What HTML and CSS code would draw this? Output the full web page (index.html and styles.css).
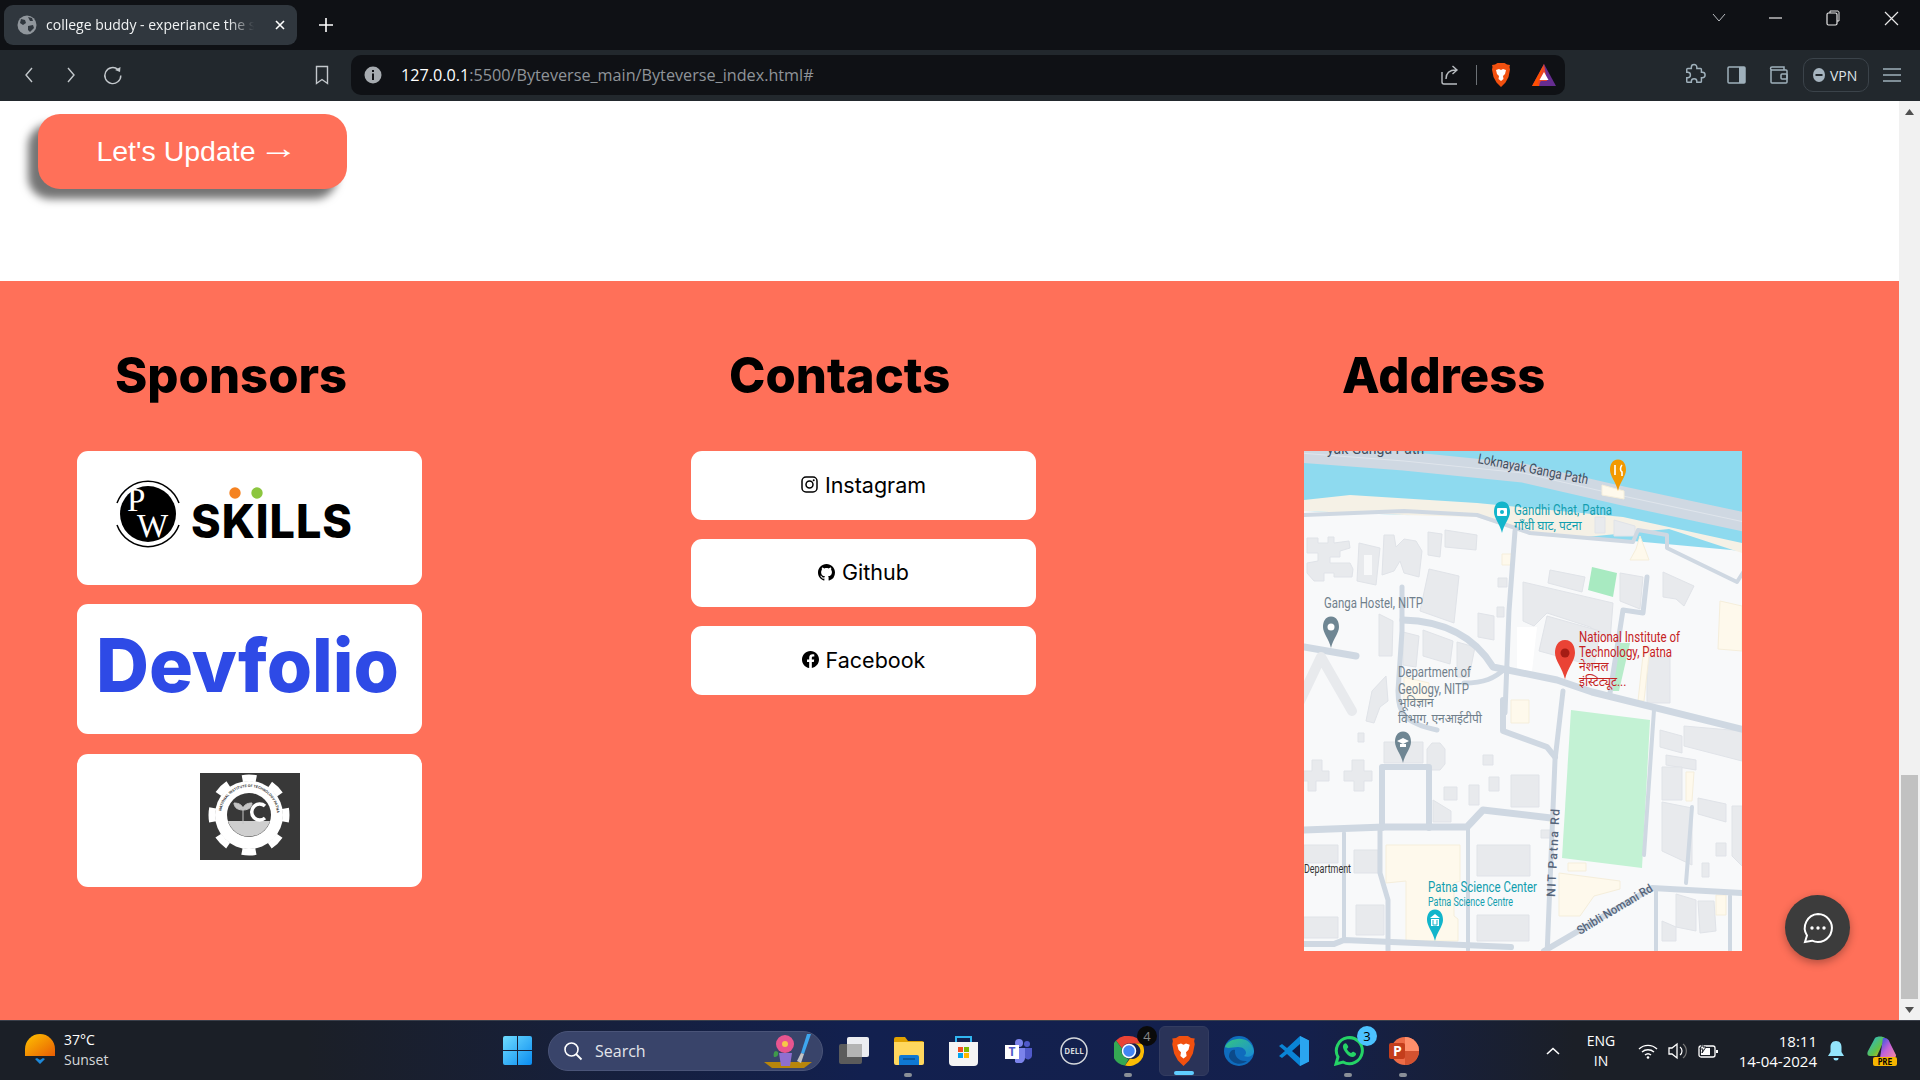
FILE: index.html
```html
<!DOCTYPE html>
<html lang="en">
<head>
    <meta charset="UTF-8">
    <meta name="viewport" content="width=device-width, initial-scale=1.0">
    <title>college buddy - experiance the smart way</title>
    <link rel="stylesheet" href="styles.css">
</head>
<body>
<div class="screen">

    <!-- browser tabs -->
    <div class="tabbar">
        <div class="tab">
            <svg class="tab-globe" width="20" height="20" viewBox="0 0 20 20"><circle cx="10" cy="10" r="9.5" fill="#90969c"/><path d="M4 4l4 1 1 3-3 2-3-2zM11 11l5-1 1 3-4 4-2-2zM11 2l4 1 1 3-3 0z" fill="#30373e"/></svg>
            <span class="tab-title">college buddy - experiance the s</span>
            <svg width="12" height="12" viewBox="0 0 12 12"><path d="M2 2l8 8M10 2l-8 8" stroke="#fff" stroke-width="1.6"/></svg>
        </div>
        <svg class="newtab" width="16" height="16" viewBox="0 0 16 16"><path d="M8 1v14M1 8h14" stroke="#fff" stroke-width="1.6"/></svg>
        <div class="winctl">
            <svg width="58" height="36" viewBox="0 0 58 36"><path d="M25 14l6 7 6-7" fill="none" stroke="#b9bdc1"/></svg>
            <svg width="58" height="36" viewBox="0 0 58 36"><path d="M23 18h13" stroke="#e8e8e8" stroke-width="1.2"/></svg>
            <svg width="58" height="36" viewBox="0 0 58 36"><rect x="23" y="13" width="10" height="12" rx="1.5" fill="none" stroke="#e8e8e8" stroke-width="1.2"/><path d="M26 13v-2h8a1.500 1.500 0 0 1 1 1v9h-2" fill="none" stroke="#e8e8e8"/></svg>
            <svg width="58" height="36" viewBox="0 0 58 36"><path d="M23 12l13 13M36 12L23 25" stroke="#e8e8e8" stroke-width="1.2"/></svg>
        </div>
    </div>

    <!-- browser toolbar -->
    <div class="toolbar">
        <div class="tool"><svg width="20" height="20" viewBox="0 0 20 20"><path d="M13 3l-6 7 6 7" fill="none" stroke="#c3c8cc" stroke-width="1.4"/></svg></div>
        <div class="tool"><svg width="20" height="20" viewBox="0 0 20 20"><path d="M7 3l6 7-6 7" fill="none" stroke="#c3c8cc" stroke-width="1.4"/></svg></div>
        <div class="tool"><svg width="22" height="22" viewBox="0 0 22 22"><path d="M16 5.500a8 8 0 1 0 2.800 6" fill="none" stroke="#c3c8cc" stroke-width="1.400"/><path d="M13 6l5 2 .5-5z" fill="#c3c8cc"/></svg></div>
        <div class="tool tool-bookmark"><svg width="18" height="20" viewBox="0 0 18 20"><path d="M3.500 1.500h11v17l-5.500-4-5.500 4z" fill="none" stroke="#c3c8cc" stroke-width="1.400"/></svg></div>
        <div class="urlbar">
            <svg class="url-info" width="18" height="18" viewBox="0 0 18 18"><circle cx="9" cy="9" r="8.500" fill="#a6abb0"/><path d="M8 4h2v2H8zM8 7.500h2V14H8z" fill="#0f1115"/></svg>
            <span class="url-text"><b>127.0.0.1</b>:5500/Byteverse_main/Byteverse_index.html#</span>
            <svg class="url-share" width="22" height="22" viewBox="0 0 22 22"><path d="M3 8v10a2 2 0 0 0 2 2h13" fill="none" stroke="#b9bdc1" stroke-width="1.400"/><path d="M7 15c0-6 4-9 10-9M13.500 2l4.500 4-4.500 4" fill="none" stroke="#b9bdc1" stroke-width="1.400"/></svg>
            <span class="url-sep"></span>
            <svg class="url-brave" width="20" height="24" viewBox="0 0 20 24"><path d="M4 1.500L6.500 0h7L16 1.500l3 .5-.5 2 .5 2.500-1.500 7.500-3 5.500-4.500 4.500-4.500-4.500-3-5.500L1 6.500 1.500 4 1 2z" fill="#f1500f"/><path d="M5 7l3-1 2 1 2-1 3 1-1 4-2 2 .5 3-2.500 2-2.500-2 .5-3-2-2z" fill="#fff"/></svg>
            <svg class="url-bat" width="24" height="22" viewBox="0 0 24 22"><path d="M12 0l12 22H0z" fill="#662d91"/><path d="M12 0L0 22h7z" fill="#ff5000"/><path d="M12 0L5 22l4-5h6z" fill="#e8462b"/><path d="M12 8l4.500 8h-9z" fill="#fff"/></svg>
        </div>
        <div class="tool tool-ext"><svg width="22" height="24" viewBox="0 0 24 24"><path d="M8 3.500a3 3 0 0 1 6 0V5h4a1 1 0 0 1 1 1v3h1a3 3 0 0 1 0 6h-1v4a1 1 0 0 1-1 1h-4v-1a3 3 0 0 0-6 0v1H4a1 1 0 0 1-1-1v-4h1a3 3 0 0 0 0-6H3V6a1 1 0 0 1 1-1h4z" fill="none" stroke="#9fb0bb" stroke-width="1.600"/></svg></div>
        <div class="tool"><svg width="20" height="20" viewBox="0 0 20 20"><rect x="1" y="2" width="17" height="16" rx="1" fill="none" stroke="#9fb0bb" stroke-width="1.500"/><rect x="12" y="2" width="6" height="16" fill="#9fb0bb"/></svg></div>
        <div class="tool"><svg width="20" height="20" viewBox="0 0 20 20"><path d="M2 5v12a1 1 0 0 0 1 1h14a1 1 0 0 0 1-1V6a1 1 0 0 0-1-1H3a1.500 1.500 0 0 1 0-3h12v3" fill="none" stroke="#9fb0bb" stroke-width="1.500"/><rect x="12" y="9" width="6" height="5" rx="1" fill="none" stroke="#9fb0bb" stroke-width="1.500"/></svg></div>
        <div class="vpn"><svg width="12" height="14" viewBox="0 0 12 14"><ellipse cx="6" cy="7" rx="6" ry="7" fill="#a6b4bf"/><rect x="2.500" y="6" width="7" height="2" fill="#22282d"/></svg><span>VPN</span></div>
        <div class="tool tool-menu"><svg width="18" height="14" viewBox="0 0 18 14"><path d="M0 1h18M0 7h18M0 13h18" stroke="#9fb0bb" stroke-width="1.500"/></svg></div>
    </div>

    <!-- the page -->
    <div class="viewport">
        <div class="page">
            <section class="update">
                <button class="update-btn">Let's Update<span class="update-arrow">→</span></button>
            </section>

            <footer class="site-footer">
                <div class="col">
                    <h2>Sponsors</h2>
                    <div class="card card-first">
                        <svg class="logo" width="345" height="134" viewBox="0 0 345 134">
                            <circle cx="71" cy="63" r="28" fill="#000"/>
                            <path d="M40 52a33 33 0 0 1 62 0M40 74a33 33 0 0 0 62 0" fill="none" stroke="#000" stroke-width="1.500"/>
                            <text class="pw-letter" x="50" y="60">P</text>
                            <text class="pw-letter" x="60" y="86">W</text>
                            <text class="pw-skills" x="114" y="87" textLength="162" lengthAdjust="spacingAndGlyphs">SKILLS</text>
                            <circle cx="158" cy="42" r="5.700" fill="#f58220"/>
                            <circle cx="180" cy="42" r="5.700" fill="#8cc63f"/>
                        </svg>
                    </div>
                    <div class="card">
                        <svg class="logo" width="345" height="130" viewBox="0 0 345 130">
                            <text class="devfolio" x="19" y="88" textLength="303" lengthAdjust="spacingAndGlyphs">Devfolio</text>
                        </svg>
                    </div>
                    <div class="card">
                        <svg class="logo" width="345" height="133" viewBox="0 0 345 133">
                            <rect x="123" y="19" width="100" height="87" fill="#383838"/>
                            <circle cx="172" cy="61" r="34" fill="#fff"/>
                            <circle cx="172" cy="61" r="37" fill="none" stroke="#fff" stroke-width="7" stroke-dasharray="14 15.060" stroke-dashoffset="7"/>
                            <circle cx="172" cy="61" r="22" fill="#383838"/>
                            <path d="M151 67h42a22 22 0 0 1-42 0z" fill="#cfcfcf"/>
                            <path d="M166 70V54M166 56c-7 0-9-4-9-7 5 0 9 2 9 7zM166 56c0-5 4-7 9-7 0 3-2 7-9 7z" fill="#c4c4c4" stroke="#c4c4c4" stroke-width="1"/>
                            <path d="M188 52a8 8 0 1 0 0 12" fill="none" stroke="#fff" stroke-width="3.500"/>
                            <path id="gearArc" d="M144 61a28 28 0 0 1 56 0" fill="none"/>
                            <text class="gear-text"><textPath href="#gearArc" startOffset="4">NATIONAL INSTITUTE OF TECHNOLOGY PATNA</textPath></text>
                        </svg>
                    </div>
                </div>

                <div class="col">
                    <h2>Contacts</h2>
                    <a class="contact contact-tall" href="#">
                        <svg width="17" height="17" viewBox="0 0 17 17"><rect x="1" y="1" width="15" height="15" rx="4" fill="none" stroke="#000" stroke-width="1.500"/><circle cx="8.500" cy="8.500" r="3.500" fill="none" stroke="#000" stroke-width="1.500"/><circle cx="12.700" cy="4.300" r="1" fill="#000"/></svg>
                        Instagram
                    </a>
                    <a class="contact" href="#">
                        <svg width="17" height="17" viewBox="0 0 16 16"><path d="M8 0C3.580 0 0 3.580 0 8c0 3.540 2.290 6.530 5.470 7.590.4.070.55-.17.55-.38 0-.19-.01-.82-.01-1.490-2.010.37-2.530-.49-2.690-.94-.09-.23-.48-.94-.82-1.130-.28-.15-.68-.52-.01-.53.63-.01 1.080.58 1.230.82.720 1.210 1.870.87 2.330.66.070-.52.280-.87.510-1.070-1.780-.2-3.640-.89-3.640-3.950 0-.87.310-1.590.82-2.150-.08-.2-.36-1.020.08-2.120 0 0 .67-.21 2.200.82.640-.18 1.320-.27 2-.27.680 0 1.360.09 2 .27 1.530-1.040 2.200-.82 2.200-.82.440 1.100.160 1.920.080 2.120.510.560.820 1.270.820 2.150 0 3.070-1.870 3.750-3.650 3.950.290.250.540.730.540 1.480 0 1.070-.01 1.930-.01 2.200 0 .210.150.460.550.380A8.012 8.012 0 0 0 16 8c0-4.420-3.580-8-8-8z"/></svg>
                        Github
                    </a>
                    <a class="contact contact-tall" href="#">
                        <svg width="17" height="17" viewBox="0 0 16 16"><path d="M16 8.049c0-4.446-3.582-8.050-8-8.050C3.580 0-.002 3.603-.002 8.050c0 4.017 2.926 7.347 6.750 7.951v-5.625h-2.030V8.050H6.750V6.275c0-2.017 1.195-3.131 3.022-3.131.876 0 1.791.157 1.791.157v1.980h-1.009c-.993 0-1.303.621-1.303 1.258v1.510h2.218l-.354 2.326H9.250V16c3.824-.604 6.750-3.934 6.750-7.951z"/></svg>
                        Facebook
                    </a>
                </div>

                <div class="col">
                    <h2>Address</h2>
                    <svg class="map" width="438" height="500" viewBox="0 0 438 500">
                        <defs>
                            <path id="pin" d="M0 -10.500C6 -10.500 8 -5 8 0C8 6 2 12 0 21C-2 12 -8 6 -8 0C-8 -5 -6 -10.500 0 -10.500Z"/>
                        </defs>
                        <rect width="438" height="500" fill="#f8f9fa"/>
                        <path d="M0 0H438V100L0 60Z" fill="#8edaef"/>
                        <path d="M0 49L46 44L173 52L319 66L438 92V102L365 78L240 90L180 75L100 64L0 60Z" fill="#f5f1e6"/>
                        <path d="M0 60L100 64L173 66L226 84L330 92L340 110L438 108V500H0Z" fill="#f8f9fa"/>
                        <path class="m-road" d="M-5 2L100 10L219 22L319 45L445 72" stroke="#d3dbe5" stroke-width="19"/>
                        <path d="M-5 2L100 10L219 22L319 45L445 72" fill="none" stroke="#dfe5ec" stroke-width="1"/>

                        <g class="m-bld">
                            <polygon points="3,87 14,87 14,92 24,92 24,86 30,86 30,92 45,90 46,97 36,100 36,106 26,106 26,112 46,112 49,118 48,126 30,126 30,122 20,122 20,130 10,130 3,122 3,112 14,110 14,102 3,102"/>
                            <polygon points="55,92 76,97 72,134 53,130"/>
                            <polygon points="80,84 90,84 92,96 100,88 112,90 118,100 115,126 100,122 96,110 90,120 78,124"/>
                            <polygon points="124,81 138,83 136,106 124,104"/>
                            <polygon points="141,79 173,84 172,99 141,96"/>
                            <polygon points="125,118 155,125 150,172 116,160"/>
                            <polygon points="194,127 203,127 203,136 194,136"/>
                            <polygon points="219,131 309,152 306,190 286,176 243,162 230,175 219,170"/>
                            <polygon points="243,165 296,180 290,215 235,200"/>
                            <polygon points="246,119 281,126 278,141 244,132"/>
                            <polygon points="316,122 339,126 336,158 316,150"/>
                            <polygon points="359,121 390,135 380,155 372,148 359,146"/>
                            <polygon points="291,66 301,66 301,82 291,82"/>
                            <polygon points="310,69 331,75 331,85 310,85"/>
                            <polygon points="343,206 366,206 366,252 343,252"/>
                            <polygon points="119,179 149,190 146,213 119,205"/>
                            <polygon points="99,181 115,185 112,216 99,214"/>
                            <polygon points="75,163 89,170 88,205 75,205"/>
                            <polygon points="153,191 171,196 165,226 153,226"/>
                            <polygon points="174,162 190,165 190,189 174,186"/>
                            <polygon points="193,156 200,156 200,166 193,166"/>
                            <polygon points="68,240 82,225 84,250 76,256 70,272 62,270"/>
                            <polygon points="356,279 378,285 378,302 356,296"/>
                            <polygon points="380,275 438,280 438,310 380,295"/>
                            <polygon points="362,304 392,309 392,319 362,314"/>
                            <polygon points="358,316 378,316 378,349 358,349"/>
                            <polygon points="358,351 388,357 388,414 358,400"/>
                            <polygon points="394,347 422,353 422,371 394,363"/>
                            <polygon points="412,392 422,392 422,405 412,405"/>
                            <polygon points="428,355 438,355 438,415 428,405"/>
                            <polygon points="207,324 235,324 235,356 207,356"/>
                            <polygon points="165,334 175,334 175,354 165,354"/>
                            <polygon points="185,326 195,326 195,340 185,340"/>
                            <polygon points="140,336 153,336 153,349 140,349"/>
                            <polygon points="129,349 147,360 147,371 129,371"/>
                            <polygon points="128,292 136,292 141,298 141,313 136,319 128,319 123,313 123,298"/>
                            <polygon points="80,291 119,291 119,312 80,312"/>
                            <polygon points="40,320 48,320 48,309 60,309 60,320 68,320 68,330 60,330 60,340 50,340 50,330 40,330"/>
                            <polygon points="0,320 8,320 8,309 18,309 18,320 25,320 25,330 12,330 12,340 4,340 4,330 0,330"/>
                            <polygon points="54,282 60,282 60,291 54,291"/>
                            <polygon points="179,304 189,304 189,314 179,314"/>
                            <polygon points="50,399 74,399 74,422 50,422"/>
                            <polygon points="0,394 34,394 34,412 0,412"/>
                            <polygon points="0,466 34,466 34,487 0,487"/>
                            <polygon points="52,454 80,454 80,484 52,484"/>
                            <polygon points="173,394 226,394 226,425 173,425"/>
                            <polygon points="173,464 225,464 225,490 173,490"/>
                            <polygon points="237,379 247,379 247,387 237,387"/>
                            <polygon points="398,412 405,412 405,426 398,426"/>
                            <polygon points="372,443 392,449 392,480 372,476"/>
                            <polygon points="394,450 410,450 412,480 396,482"/>
                            <polygon points="358,470 372,476 372,490 358,490"/>
                        </g>
                        <rect x="60" y="104" width="8" height="20" fill="#f8f9fa"/>
                        <g class="m-yel">
                            <polygon points="298,34 320,40 320,48 298,44"/>
                            <polygon points="198,103 209,103 209,114 198,114"/>
                            <polygon points="326,109 332,98 336,85 341,98 345,109"/>
                            <polygon points="416,150 438,155 438,200 414,198"/>
                            <polygon points="340,195 346,195 340,250 334,250"/>
                            <polygon points="382,321 390,321 388,350 382,350"/>
                            <polygon points="82,394 156,394 156,430 150,432 150,465 154,468 154,490 102,490 102,430 82,432"/>
                            <polygon points="255,422 316,430 316,438 290,445 276,465 255,465"/>
                            <polygon points="264,412 282,412 282,420 264,420"/>
                            <polygon points="207,249 225,249 225,272 207,272"/>
                            <polygon points="412,444 422,444 422,464 412,464"/>
                            <polygon points="100,226 125,232 125,250 100,250"/>
                        </g>
                        <polygon points="213,176 233,176 228,220 213,220" fill="#fff"/>

                        <polygon points="267,259 346,269 338,417 258,407" fill="#c3f2d4"/>
                        <polygon points="288,116 313,122 309,146 284,139" fill="#a8eac1"/>
                        <polygon points="316,192 326,192 315,240 305,240" fill="#b7ecca"/>

                        <path class="m-road" stroke-width="4" d="M0 64L100 60L173 64L226 82L329 91L334 79L363 84L363 97L433 131L440 120"/>
                        <path class="m-road" stroke-width="5" d="M211 80L205 160L201 262"/>
                        <path class="m-road" stroke-width="7" d="M99 169C140 170 170 185 189 216L253 229L288 241L445 280"/>
                        <path class="m-road" stroke-width="5" d="M98 136V180L94 240C94 262 100 272 133 279"/>
                        <path class="m-road" stroke-width="7" d="M0 196L52 205"/>
                        <path class="m-road" stroke-width="5" d="M203 216C190 228 180 232 160 232"/>
                        <path class="m-road m-light" stroke-width="10" d="M-4 250L17 206L48 260"/>
                        <path class="m-road" stroke-width="6" d="M78 377V316H125V377"/>
                        <path class="m-road" stroke-width="7" d="M0 379L80 376H163L179 359L247 367"/>
                        <path class="m-road" stroke-width="4" d="M164 377V499"/>
                        <path class="m-road" stroke-width="4" d="M40 382V489"/>
                        <path class="m-road" stroke-width="5" d="M76 379V422L84 449V499"/>
                        <path class="m-road" stroke-width="6" d="M0 493H30L40 489L207 496"/>
                        <path class="m-road" stroke-width="6" d="M199 249V280L243 296L251 306"/>
                        <path class="m-road" stroke-width="5" d="M259 240L251 309L243 505"/>
                        <path class="m-road" stroke-width="4" d="M350 259L340 404"/>
                        <path class="m-road" stroke-width="4" d="M388 356L382 432"/>
                        <path class="m-road" stroke-width="6" d="M240 500L348 437L438 442"/>
                        <path class="m-road" stroke-width="4" d="M352 440V505M426 445V505"/>
                        <path class="m-road" stroke-width="5" d="M343 126L339 162L319 159L306 242"/>

                        <text class="m-label m-dark" x="23" y="3">yak Ganga Path</text>
                        <text class="m-label m-dark" transform="rotate(11 174 8)" x="174" y="12" textLength="112" lengthAdjust="spacingAndGlyphs">Loknayak Ganga Path</text>
                        <text class="m-label m-teal" x="210" y="64" textLength="98" lengthAdjust="spacingAndGlyphs">Gandhi Ghat, Patna</text>
                        <text class="m-small m-teal" x="210" y="79">गाँधी घाट, पटना</text>
                        <text class="m-label m-slate" x="20" y="157" textLength="99" lengthAdjust="spacingAndGlyphs">Ganga Hostel, NITP</text>
                        <text class="m-label m-red" x="275" y="191" textLength="101" lengthAdjust="spacingAndGlyphs">National Institute of</text>
                        <text class="m-label m-red" x="275" y="206" textLength="93" lengthAdjust="spacingAndGlyphs">Technology, Patna</text>
                        <text class="m-small m-red" x="275" y="220">नेशनल</text>
                        <text class="m-small m-red" x="275" y="235">इंस्टिट्यूट...</text>
                        <text class="m-label m-slate" x="94" y="226" textLength="73" lengthAdjust="spacingAndGlyphs">Department of</text>
                        <text class="m-label m-slate" x="94" y="243" textLength="71" lengthAdjust="spacingAndGlyphs">Geology, NITP</text>
                        <text class="m-small m-slate" x="94" y="256">भूविज्ञान</text>
                        <text class="m-small m-slate" x="94" y="272">विभाग, एनआईटीपी</text>
                        <text class="m-small m-ink" x="0" y="422" textLength="47" lengthAdjust="spacingAndGlyphs">Department</text>
                        <text class="m-label m-teal" x="124" y="441" textLength="109" lengthAdjust="spacingAndGlyphs">Patna Science Center</text>
                        <text class="m-small m-teal" x="124" y="455" textLength="85" lengthAdjust="spacingAndGlyphs">Patna Science Centre</text>
                        <text class="m-road-name" transform="rotate(-87 251 446)" x="251" y="446" textLength="88">NIT Patna Rd</text>
                        <text class="m-road-name" transform="rotate(-31 276 484)" x="276" y="484" textLength="86" lengthAdjust="spacingAndGlyphs">Shibli Nomani Rd</text>

                        <use href="#pin" transform="translate(261 202) scale(1.250)" fill="#ea4335"/>
                        <circle cx="261" cy="202" r="4.500" fill="#a51c14"/>
                        <use href="#pin" transform="translate(314 19)" fill="#f29900"/>
                        <path d="M311 14v10M318 14c-2 2-2 6 0 7v4" fill="none" stroke="#fff" stroke-width="1.600"/>
                        <use href="#pin" transform="translate(198 61)" fill="#12b5cb"/>
                        <rect x="193" y="57" width="10" height="8" rx="1" fill="#fff"/>
                        <circle cx="198" cy="61" r="2" fill="#12b5cb"/>
                        <use href="#pin" transform="translate(27 176)" fill="#6f8693"/>
                        <circle cx="27" cy="176" r="3.500" fill="#fff"/>
                        <use href="#pin" transform="translate(99 291)" fill="#6f8693"/>
                        <path d="M93 290l6-3 6 3-6 3zM96 293v3h6v-3" fill="#fff"/>
                        <use href="#pin" transform="translate(131 469)" fill="#12b5cb"/>
                        <path d="M126 467l5-4 5 4zM127 468h8v7h-8z" fill="#fff"/>
                        <path d="M129 469v5h4v-5" fill="none" stroke="#12b5cb"/>
                    </svg>
                </div>
            </footer>
        </div>

        <div class="scrollbar">
            <div class="scroll-arrow"><svg width="9" height="6" viewBox="0 0 9 6"><path d="M4.500 0L9 6H0z" fill="#505050"/></svg></div>
            <div class="scroll-track"><div class="scroll-thumb"></div></div>
            <div class="scroll-arrow"><svg width="9" height="6" viewBox="0 0 9 6"><path d="M0 0H9L4.500 6z" fill="#505050"/></svg></div>
        </div>

        <button class="chat-btn">
            <svg width="34" height="34" viewBox="0 0 34 34"><path d="M17 3a14 14 0 1 1-6 26.700L4 31l2-6.500A14 14 0 0 1 17 3z" fill="none" stroke="#fff" stroke-width="2"/><circle cx="11" cy="17" r="1.700" fill="#fff"/><circle cx="17" cy="17" r="1.700" fill="#fff"/><circle cx="23" cy="17" r="1.700" fill="#fff"/></svg>
        </button>
    </div>

    <!-- windows taskbar -->
    <div class="taskbar">
        <div class="weather">
            <svg width="32" height="34" viewBox="0 0 32 34"><defs><linearGradient id="sun" x1="0" x2="1" y1="0" y2="1"><stop offset="0" stop-color="#ffc400"/><stop offset="1" stop-color="#e85d04"/></linearGradient></defs><path d="M1 22V15a15 15 0 0 1 30 0v7z" fill="url(#sun)"/><path d="M11 25l5 5 5-5-2-1-3 2-3-2z" fill="#1e88d8"/></svg>
            <div class="weather-text"><span>37°C</span><span class="weather-sub">Sunset</span></div>
        </div>
        <svg class="winlogo" width="29" height="29" viewBox="0 0 29 29"><defs><linearGradient id="win" x1="0" x2="1" y1="0" y2="1"><stop offset="0" stop-color="#6fdcff"/><stop offset="1" stop-color="#0a8cf0"/></linearGradient></defs><path d="M0 2a2 2 0 0 1 2-2h12v14H0zM15 0h12a2 2 0 0 1 2 2v12H15zM0 15h14v14H2a2 2 0 0 1-2-2zM15 15h14v12a2 2 0 0 1-2 2H15z" fill="url(#win)"/></svg>
        <div class="searchbox">
            <svg width="20" height="20" viewBox="0 0 20 20"><circle cx="8.500" cy="8.500" r="6.500" fill="none" stroke="#fff" stroke-width="1.600"/><path d="M13 13l5.500 5.500" stroke="#fff" stroke-width="1.800"/></svg>
            <span>Search</span>
            <svg class="search-art" width="52" height="36" viewBox="0 0 52 36"><path d="M2 29h48l-8 6H10z" fill="#b8860b"/><path d="M17 20h13l-2 13h-9z" fill="#8e6fd0"/><circle cx="23" cy="11" r="9" fill="#e8558f"/><circle cx="23" cy="11" r="3" fill="#f7c948"/><path d="M14 18c-2 0-3 3-2 6 3 0 5-2 4-5z" fill="#3f9b4b"/><path d="M49 1l-7 20-3-1 6-19z" fill="#3ea6ee"/><path d="M39 20l3 1-3 9-4-2z" fill="#c4c4c4"/></svg>
        </div>
        <div class="apps">
            <div class="app"><svg width="32" height="28" viewBox="0 0 32 28"><rect x="1" y="7" width="23" height="20" rx="2" fill="#5b5b5b"/><rect x="9" y="0" width="22" height="20" rx="2" fill="#fff" fill-opacity=".92"/><rect x="9" y="7" width="15" height="13" fill="#b4b4b4"/></svg></div>
            <div class="app open"><svg width="30" height="28" viewBox="0 0 30 28"><path d="M0 2a2 2 0 0 1 2-2h9l3 4h14a2 2 0 0 1 2 2v2H0z" fill="#e0a100"/><path d="M0 5h30v21a2 2 0 0 1-2 2H2a2 2 0 0 1-2-2z" fill="#ffd75e"/><path d="M5 20a2 2 0 0 1 2-2h16a2 2 0 0 1 2 2v8H5z" fill="#0f78d4"/><path d="M9 22h12" stroke="#0a4f8e" stroke-width="1.500"/></svg></div>
            <div class="app"><svg width="29" height="30" viewBox="0 0 29 30"><path d="M7 7V1h15v6" fill="none" stroke="#31b5f0" stroke-width="2"/><path d="M0 6h29v20a4 4 0 0 1-4 4H4a4 4 0 0 1-4-4z" fill="#f4f4f4"/><rect x="9" y="11" width="5" height="5" fill="#f25022"/><rect x="15" y="11" width="5" height="5" fill="#7fba00"/><rect x="9" y="17" width="5" height="5" fill="#00a4ef"/><rect x="15" y="17" width="5" height="5" fill="#ffb900"/></svg></div>
            <div class="app"><svg width="27" height="24" viewBox="0 0 27 24"><circle cx="14" cy="4" r="4" fill="#7b83eb"/><circle cx="22" cy="5" r="3" fill="#5059c9"/><path d="M10 9h10v10a6 6 0 0 1-10 4z" fill="#7b83eb"/><path d="M20 9h7v8a4 4 0 0 1-7 2z" fill="#5059c9"/><rect x="0" y="6" width="14" height="14" fill="#fff"/><text class="teams-t" x="3.500" y="17">T</text></svg></div>
            <div class="app"><svg width="28" height="28" viewBox="0 0 28 28"><circle cx="14" cy="14" r="13" fill="none" stroke="#d5d8dc" stroke-width="1.500"/><text class="dell-t" x="14" y="17" text-anchor="middle">DELL</text></svg></div>
            <div class="app open"><svg width="30" height="30" viewBox="0 0 30 30"><path d="M15 0a15 15 0 0 1 13 7.500H15a7.500 7.500 0 0 0-7 5L2 4.500A15 15 0 0 1 15 0z" fill="#ea4335"/><path d="M2 4.500l6 8a7.500 7.500 0 0 0 7 10l-4 7A15 15 0 0 1 2 4.500z" fill="#34a853"/><path d="M28 7.500A15 15 0 0 1 11 29.500l5-7a7.500 7.500 0 0 0 5-15z" fill="#fbbc04"/><circle cx="15" cy="15" r="6.500" fill="#4285f4" stroke="#fff" stroke-width="1.500"/></svg><span class="badge badge-dark">4</span></div>
            <div class="app app-active"><svg width="25" height="30" viewBox="0 0 20 24"><path d="M4 1.500L6.500 0h7L16 1.500l3 .5-.5 2 .5 2.500-1.500 7.500-3 5.500-4.500 4.500-4.500-4.500-3-5.500L1 6.500 1.500 4 1 2z" fill="#f1500f"/><path d="M5 7l3-1 2 1 2-1 3 1-1 4-2 2 .5 3-2.500 2-2.500-2 .5-3-2-2z" fill="#fff"/></svg></div>
            <div class="app"><svg width="30" height="30" viewBox="0 0 30 30"><defs><linearGradient id="edge" x1="0" x2="1" y1="0" y2="1"><stop offset="0" stop-color="#33c481"/><stop offset="1" stop-color="#1a8cd8"/></linearGradient></defs><circle cx="15" cy="15" r="15" fill="#0f6cbd"/><path d="M1 11C4 2 26 -3 30 15c0 5-6 7-10 5 4-2 2-9-6-9-5 0-11 2-13 0z" fill="url(#edge)"/><path d="M11 14c-1 6 4 12 12 11 -6 5-15 3-18-4 0-5 3-8 6-7z" fill="#0c4a8a"/></svg></div>
            <div class="app"><svg width="30" height="30" viewBox="0 0 30 30"><path d="M21 0l9 4.500v21L21 30 8 18l-5 4-3-2 6-5-6-5 3-2 5 4z" fill="#0a84d6"/><path d="M21 0l9 4.500v21L21 30z" fill="#2aa5f0"/><path d="M21 8l-8 7 8 7z" fill="#0f1c45"/></svg></div>
            <div class="app open"><svg width="30" height="30" viewBox="0 0 30 30"><path d="M2 28l2-7a13 13 0 1 1 5 5z" fill="none" stroke="#25d366" stroke-width="3"/><path d="M10 8c2-2 3 0 4 2s-1 2-1 3 3 4 4 4 1-2 3-1 3 2 1 4-6 1-9-3-4-7-2-9z" fill="#25d366"/></svg><span class="badge badge-blue">3</span></div>
            <div class="app open"><svg width="30" height="30" viewBox="0 0 30 30"><circle cx="16" cy="15" r="14" fill="#ed6c47"/><path d="M16 1a14 14 0 0 1 14 14H16z" fill="#ff8f6b"/><path d="M16 15h14a14 14 0 0 1-14 14z" fill="#d35230"/><rect x="0" y="7" width="16" height="16" rx="2" fill="#c43e1c"/><text class="ppt-p" x="4" y="19.500">P</text></svg></div>
        </div>
        <div class="tray">
            <svg class="tray-caret" width="14" height="8" viewBox="0 0 14 8"><path d="M1 7l6-5.500L13 7" fill="none" stroke="#fff" stroke-width="1.600"/></svg>
            <div class="lang"><span>ENG</span><span>IN</span></div>
            <svg class="tray-wifi" width="20" height="16" viewBox="0 0 20 16"><path d="M1 6a13 13 0 0 1 18 0M4 9a9 9 0 0 1 12 0M7 12a4.500 4.500 0 0 1 6 0" fill="none" stroke="#fff" stroke-width="1.400"/><circle cx="10" cy="14.500" r="1.300" fill="#fff"/></svg>
            <svg class="tray-vol" width="20" height="18" viewBox="0 0 20 18"><path d="M1 6h3l5-4v14l-5-4H1z" fill="none" stroke="#fff" stroke-width="1.300"/><path d="M12 5a5 5 0 0 1 0 8" fill="none" stroke="#fff" stroke-width="1.200"/><path d="M15 2a9 9 0 0 1 0 14" fill="none" stroke="#777" stroke-width="1.200"/></svg>
            <svg class="tray-batt" width="21" height="16" viewBox="0 0 21 16"><rect x="1" y="3" width="16" height="11" rx="2" fill="none" stroke="#fff" stroke-width="1.300"/><rect x="3" y="5" width="9" height="7" fill="#fff"/><rect x="18" y="7" width="2" height="3" fill="#fff"/><path d="M5 0L2 6h3l-1 4 4-6H5z" fill="#fff" stroke="#1b1f27"/></svg>
            <div class="clock"><span>18:11</span><span>14-04-2024</span></div>
            <svg class="tray-bell" width="16" height="20" viewBox="0 0 16 20"><path d="M8 0c4 0 5.500 3 5.500 6v5l2.500 4H0l2.500-4V6C2.500 3 4 0 8 0z" fill="#93e4fb"/><path d="M5.500 17h5a2.500 2.500 0 0 1-5 0z" fill="#93e4fb"/></svg>
            <svg class="tray-copilot" width="30" height="30" viewBox="0 0 30 30"><defs><linearGradient id="cop1" x1="0" x2="1" y1="0" y2="1"><stop offset="0" stop-color="#1fb8e8"/><stop offset=".6" stop-color="#5fc14a"/><stop offset="1" stop-color="#ffb900"/></linearGradient><linearGradient id="cop2" x1="0" x2="1" y1="0" y2="1"><stop offset="0" stop-color="#2452e0"/><stop offset=".5" stop-color="#c462d8"/><stop offset="1" stop-color="#f58a9e"/></linearGradient></defs><path d="M8 2c2-2 8-2 10 0L10 20H3C0 20 0 17 1 15z" fill="url(#cop1)"/><path d="M16 2c5 0 6 2 7 5l6 12c0 3-2 3-4 3H13z" fill="url(#cop2)"/><rect x="6" y="21" width="24" height="9" rx="2" fill="#f7b500"/><text class="pre-t" x="18" y="28.500" text-anchor="middle">PRE</text></svg>
        </div>
    </div>
</div>
</body>
</html>
```

FILE: styles.css
```css
* {
    box-sizing: border-box;
}

body {
    margin: 0;
    padding: 0;
    overflow: hidden;
    background-color: #fff;
    font-family: 'Inter', sans-serif;
}

.screen {
    display: flex;
    flex-direction: column;
    width: 1920px;
    height: 1080px;
}

/* browser tabs */
.tabbar {
    display: flex;
    align-items: center;
    height: 50px;
    padding-left: 4px;
    background-color: #0f1115;
}

.tab {
    display: flex;
    align-items: center;
    width: 293px;
    height: 40px;
    padding: 0 11px 0 13px;
    background-color: #30373e;
    border-radius: 9px;
}

.tab-globe {
    flex: none;
}

.tab-title {
    width: 217px;
    margin: 0 11px 2px 9px;
    overflow: hidden;
    white-space: nowrap;
    color: #f1f3f4;
    font-family: 'Open Sans', sans-serif;
    font-size: 14px;
    -webkit-mask-image: linear-gradient(to right, #000 84%, transparent 96%);
    mask-image: linear-gradient(to right, #000 84%, transparent 96%);
}

.newtab {
    margin-left: 21px;
}

.winctl {
    display: flex;
    margin-left: auto;
    margin-top: -14px;
}

/* browser toolbar */
.toolbar {
    display: flex;
    align-items: center;
    height: 51px;
    padding: 0 0 1px 8px;
    background-color: #22282d;
}

.tool {
    display: flex;
    align-items: center;
    justify-content: center;
    width: 42px;
    height: 40px;
}

.tool-bookmark {
    margin-left: 167px;
}

.tool-ext {
    margin-left: 109px;
}

.tool-menu {
    margin-left: 2px;
}

.urlbar {
    display: flex;
    align-items: center;
    width: 1214px;
    height: 40px;
    margin-left: 8px;
    padding-left: 13px;
    background-color: #0f1115;
    border-radius: 10px;
}

.url-text {
    margin-left: 19px;
    color: #8f9499;
    font-family: 'Open Sans', sans-serif;
    font-size: 16.200px;
}

.url-text b {
    color: #fff;
    font-weight: 400;
}

.url-share {
    margin-left: auto;
}

.url-sep {
    width: 1px;
    height: 20px;
    margin: 0 14px 0 15px;
    background-color: #6c7176;
}

.url-bat {
    margin: 0 9px 0 21px;
}

.vpn {
    display: flex;
    align-items: center;
    gap: 5px;
    width: 66px;
    height: 34px;
    margin-left: 3px;
    padding-left: 9px;
    border: 1px solid #3b434a;
    border-radius: 10px;
    color: #dfe3e6;
    font-family: 'Open Sans', sans-serif;
    font-size: 14px;
}

/* the page */
.viewport {
    position: relative;
    display: flex;
    height: 919px;
    overflow: hidden;
}

.page {
    width: 1899px;
    height: 919px;
    overflow: hidden;
}

.update {
    height: 180px;
    padding: 13px 0 0 38px;
}

.update-btn {
    display: block;
    width: 309px;
    height: 75px;
    padding: 0 0 2px;
    background-color: #ff7059;
    color: #fff;
    border: none;
    border-radius: 22px;
    box-shadow: -10px 10px 9px rgba(0,0,0,0.55);
    font-family: 'Liberation Sans', Arial, sans-serif;
    font-size: 28.500px;
}

.update-arrow {
    display: inline-block;
    margin-left: 3px;
    font-family: 'Liberation Serif', serif;
    font-size: 30px;
    transform: translateY(-3px) scaleX(1.300);
    transform-origin: left center;
}

.site-footer {
    display: grid;
    grid-template-columns: 614px 613px 438px;
    height: 739px;
    padding: 63px 0 0 77px;
    background-color: #ff7059;
}

.col h2 {
    height: 64px;
    margin: 0 0 43px 38px;
    color: #000;
    font-size: 49px;
    font-weight: 800;
    line-height: 64px;
}

.card {
    width: 345px;
    margin-bottom: 20px;
    background-color: #fff;
    border-radius: 11px;
}

.card-first {
    margin-bottom: 19px;
}

.logo {
    display: block;
}

.pw-letter {
    fill: #fff;
    font-family: 'Liberation Serif', serif;
    font-size: 33px;
}

.pw-skills {
    font-size: 46px;
    font-weight: 800;
    letter-spacing: 1px;
}

.devfolio {
    fill: #2e4ae6;
    font-size: 74px;
    font-weight: 800;
}

.gear-text {
    fill: #383838;
    font-size: 3.500px;
    font-weight: 700;
}

.contact {
    display: flex;
    align-items: center;
    justify-content: center;
    gap: 7px;
    width: 345px;
    height: 68px;
    margin-bottom: 19px;
    padding-bottom: 2px;
    background-color: #fff;
    border-radius: 11px;
    color: #000;
    font-size: 21.500px;
    text-decoration: none;
}

.contact-tall {
    height: 69px;
}

.map {
    display: block;
}

.m-bld polygon {
    fill: #e8eaed;
    stroke: #e0e3e8;
}

.m-yel polygon {
    fill: #fef9ec;
    stroke: #f5eedb;
}

.m-road {
    fill: none;
    stroke: #cfd8e2;
    stroke-linecap: round;
    stroke-linejoin: round;
}

.m-light {
    stroke: #e8eaed;
}

.m-label {
    font-family: 'Roboto', sans-serif;
    font-size: 14px;
}

.m-small {
    font-family: 'Roboto', 'Noto Sans', sans-serif;
    font-size: 12px;
}

.m-road-name {
    fill: #56657a;
    font-family: 'Roboto', sans-serif;
    font-size: 12px;
    font-weight: 500;
}

.m-dark { fill: #414e5e; }
.m-teal { fill: #129eaf; }
.m-slate { fill: #70808c; }
.m-red { fill: #c5221f; }
.m-ink { fill: #333; }

.chat-btn {
    position: absolute;
    right: 70px;
    bottom: 60px;
    display: flex;
    align-items: center;
    justify-content: center;
    width: 65px;
    height: 65px;
    padding: 0;
    background-color: #3c3c3c;
    border: none;
    border-radius: 50%;
    box-shadow: 0 3px 8px rgba(0,0,0,0.3);
}

.scrollbar {
    display: flex;
    flex-direction: column;
    width: 21px;
    background-color: #f1f1f1;
}

.scroll-arrow {
    display: flex;
    align-items: center;
    justify-content: center;
    height: 21px;
}

.scroll-track {
    display: flex;
    flex: 1;
    align-items: flex-end;
    justify-content: center;
}

.scroll-thumb {
    width: 17px;
    height: 224px;
    background-color: #c1c1c1;
}

/* windows taskbar */
.taskbar {
    display: flex;
    align-items: center;
    height: 60px;
    border-top: 1px solid #3a3f4a;
    background: linear-gradient(90deg, #1b1f27 0, #1b1f27 16%, #12204f 45%, #14204c 68%, #1b1f27 82%);
    color: #fff;
    font-family: 'Open Sans', sans-serif;
    font-size: 14px;
}

.weather {
    display: flex;
    align-items: center;
    gap: 8px;
    width: 503px;
    padding-left: 24px;
}

.weather-text {
    display: flex;
    flex-direction: column;
    margin-top: -2px;
    line-height: 20px;
}

.weather-sub {
    color: #d5d7da;
}

.winlogo {
    flex: none;
}

.searchbox {
    display: flex;
    align-items: center;
    width: 275px;
    height: 40px;
    margin-left: 16px;
    padding: 0 8px 0 14px;
    background-color: #39446a;
    border: 1px solid #4a5478;
    border-radius: 20px;
    color: #e3e5ea;
    font-size: 16px;
}

.searchbox span {
    margin-left: 12px;
}

.search-art {
    margin-left: auto;
}

.apps {
    display: flex;
    margin-left: 3px;
}

.app {
    position: relative;
    display: flex;
    flex: none;
    align-items: center;
    justify-content: center;
    width: 55px;
    height: 50px;
}

.app.open::after {
    content: '';
    position: absolute;
    left: 23px;
    bottom: -1px;
    width: 8px;
    height: 4px;
    background-color: #8a8f98;
    border-radius: 2px;
}

.app-active {
    width: 50px;
    margin: 0 2.500px;
    background-color: #2a3358;
    border: 1px solid #333c60;
    border-radius: 6px;
}

.app-active::after {
    content: '';
    position: absolute;
    left: 14px;
    bottom: 0;
    width: 20px;
    height: 4px;
    background-color: #60cdff;
    border-radius: 2px;
}

.badge {
    position: absolute;
    top: 0;
    left: 36px;
    width: 20px;
    height: 20px;
    border-radius: 50%;
    font-size: 13px;
    line-height: 20px;
    text-align: center;
}

.badge-dark {
    background-color: #0a0a0a;
    color: #888;
}

.badge-blue {
    background-color: #4cc2ff;
    color: #000;
}

.teams-t {
    fill: #5059c9;
    font-size: 12px;
    font-weight: 700;
}

.dell-t {
    fill: #d5d8dc;
    font-size: 8px;
    font-weight: 700;
}

.ppt-p {
    fill: #fff;
    font-size: 14px;
    font-weight: 700;
}

.pre-t {
    fill: #000;
    font-family: 'DejaVu Sans Mono', monospace;
    font-size: 8px;
    font-weight: 700;
}

.tray {
    display: flex;
    flex: 1;
    align-items: center;
}

.tray-caret {
    margin-left: 115px;
}

.lang {
    display: flex;
    flex-direction: column;
    width: 40px;
    margin-left: 21px;
    line-height: 20px;
    text-align: center;
}

.tray-wifi {
    margin-left: 17px;
}

.tray-vol {
    margin-left: 10px;
}

.tray-batt {
    margin-left: 10px;
}

.clock {
    display: flex;
    flex-direction: column;
    width: 95px;
    margin-left: 3px;
    font-size: 15px;
    line-height: 20px;
    text-align: right;
}

.tray-bell {
    margin-left: 11px;
}

.tray-copilot {
    margin-left: 23px;
}
```
